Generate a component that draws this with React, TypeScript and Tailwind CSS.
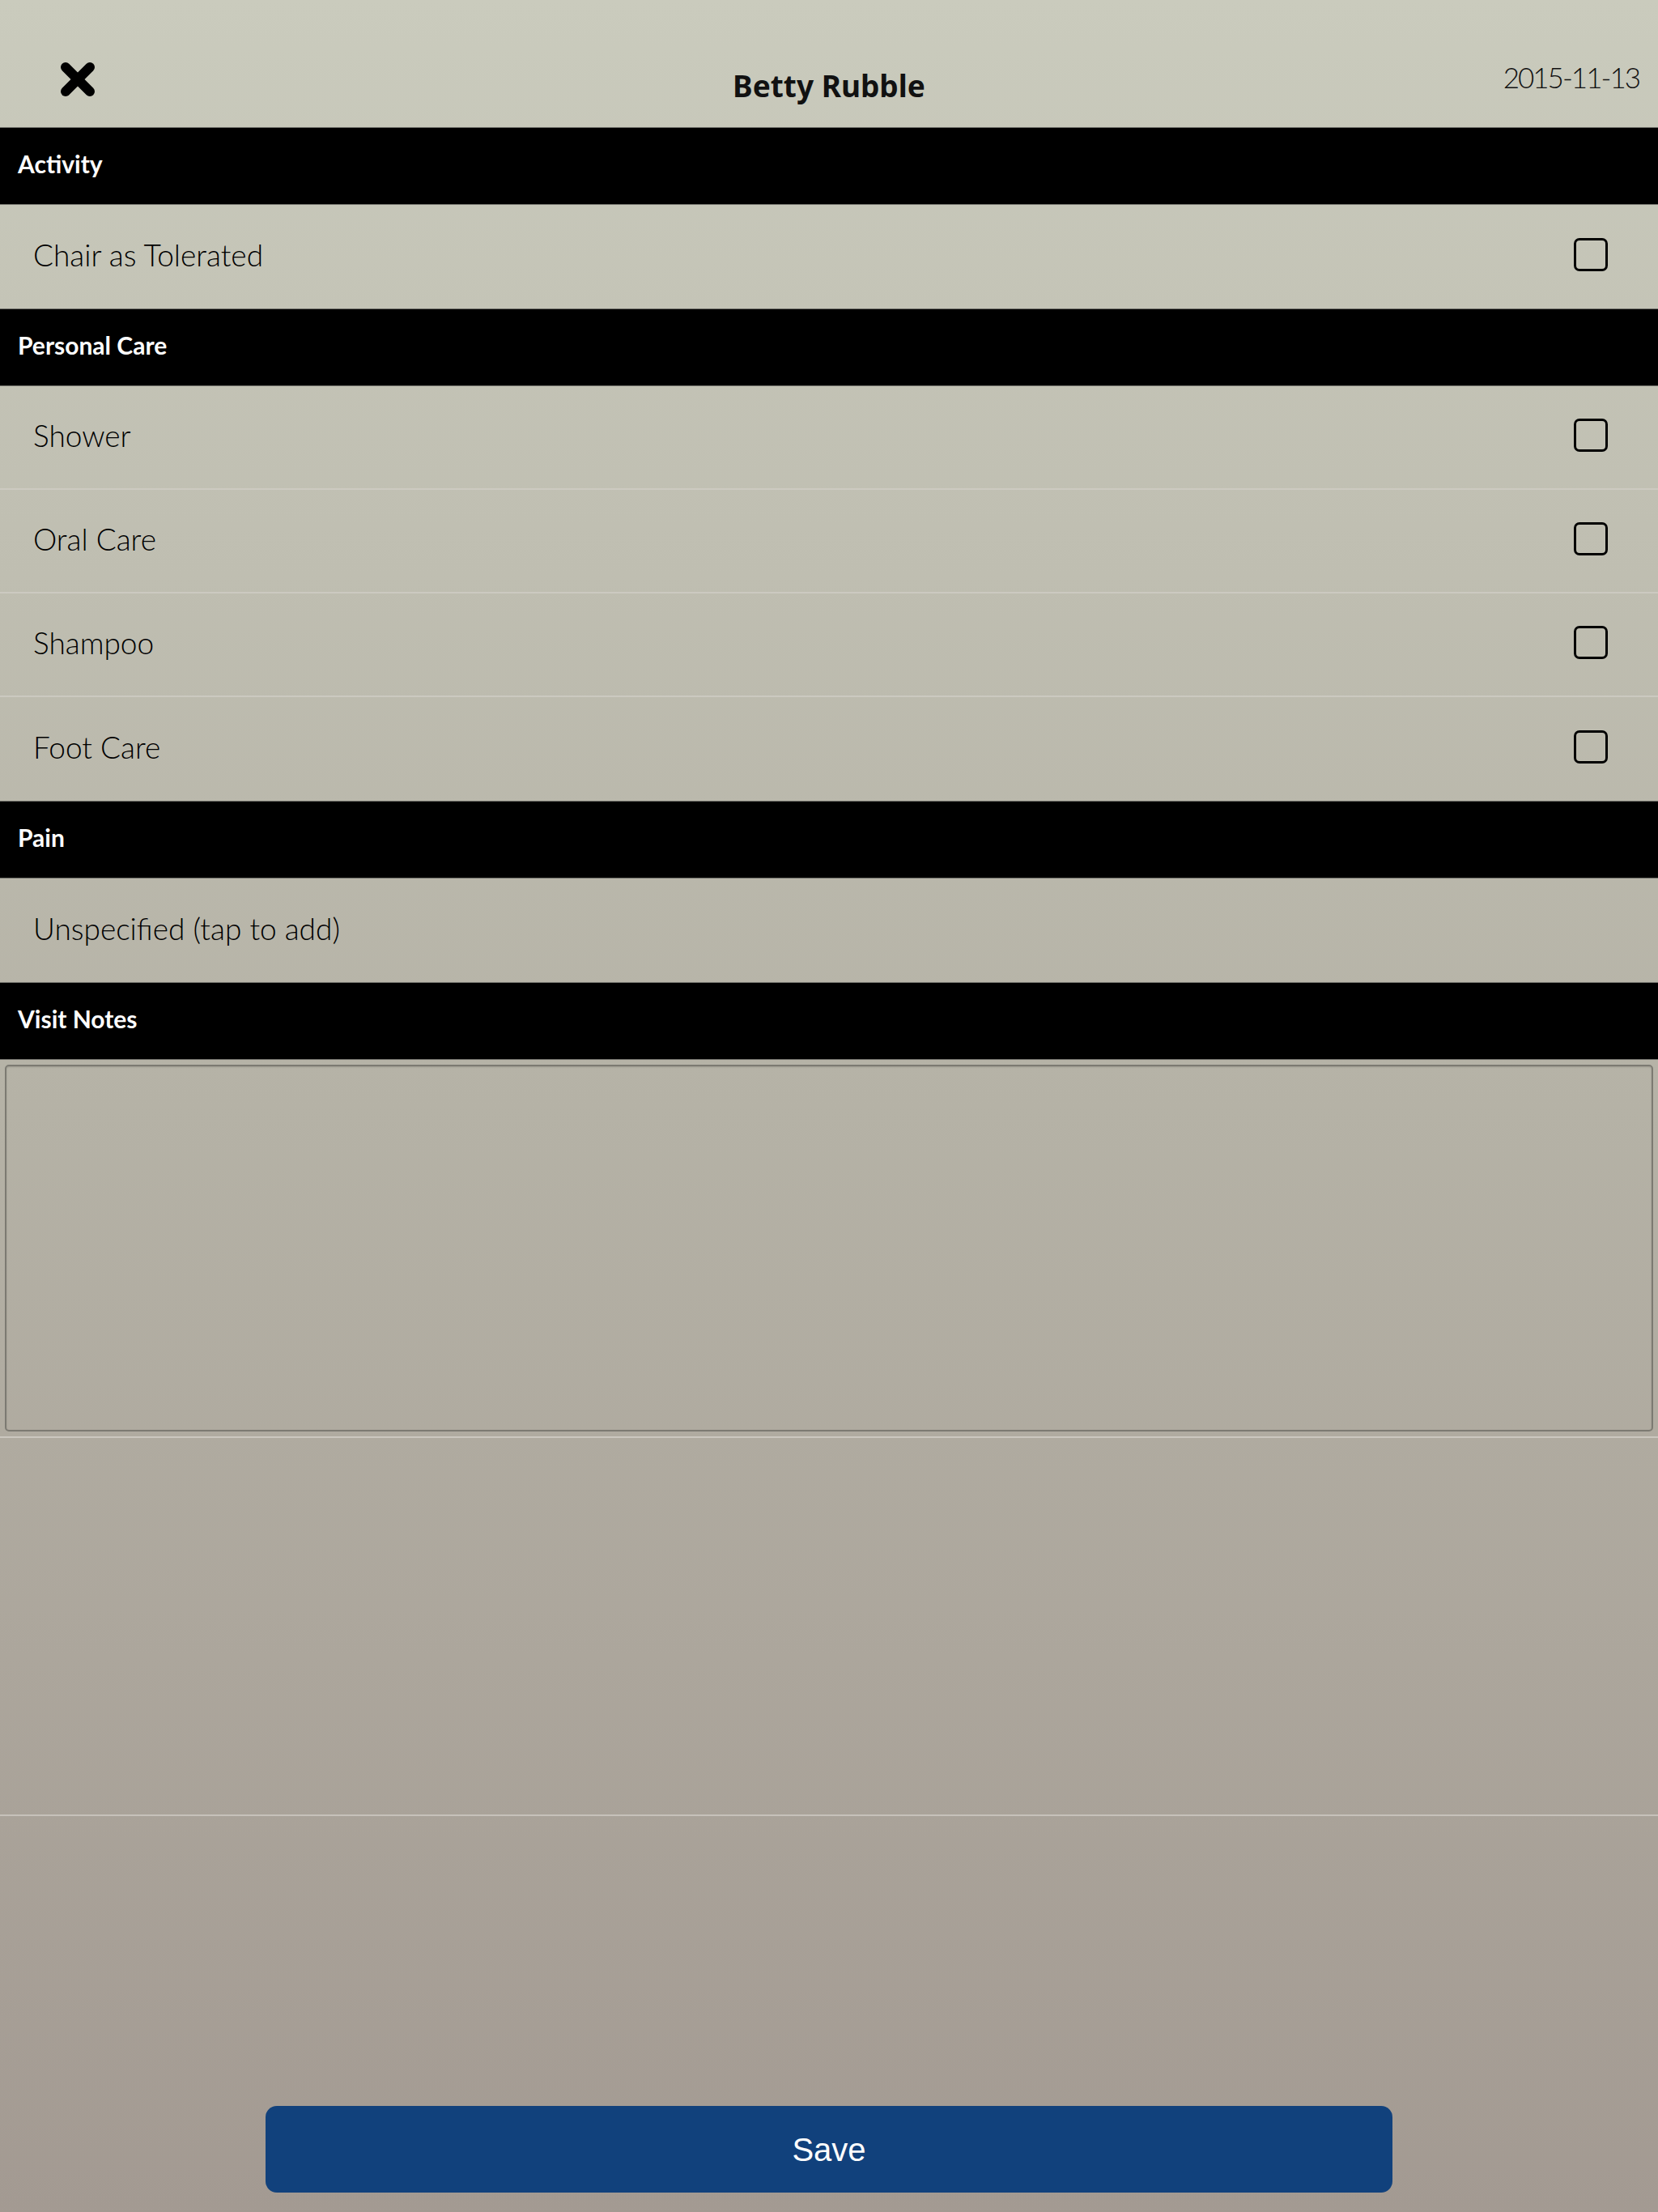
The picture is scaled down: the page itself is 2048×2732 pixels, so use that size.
import React from "react";

const sans = "font-['Lato','Noto_Sans',sans-serif]";

function CloseIcon() {
  return (
    <svg width="44" height="44" viewBox="0 0 44 44" aria-hidden="true">
      <line x1="7" y1="7" x2="37" y2="37" stroke="#000" strokeWidth="12" strokeLinecap="round" />
      <line x1="37" y1="7" x2="7" y2="37" stroke="#000" strokeWidth="12" strokeLinecap="round" />
    </svg>
  );
}

function Box() {
  return <div className="w-[42px] h-[41px] mb-[5px] rounded-[7px] border-[3px] border-black" />;
}

function SectionBar({ title }: { title: string }) {
  return (
    <div className="h-[96px] bg-black border-y border-[#6f6f69] flex items-center pl-[22px] pb-[6px]">
      <span className={`${sans} text-white font-bold text-[30px] leading-none`}>{title}</span>
    </div>
  );
}

function Row({ label, check = true, last = false }: { label: string; check?: boolean; last?: boolean }) {
  return (
    <div
      className={`h-[128px] flex items-center justify-between pl-[41px] pr-[62px] ${
        last ? "" : "border-b-2 border-[#d2cfc7]/70"
      }`}
    >
      <span className={`${sans} font-light text-[37px] leading-none text-black pb-[6px]`}>{label}</span>
      {check && <Box />}
    </div>
  );
}

export default function App() {
  return (
    <div className="w-[2048px] h-[2732px] flex flex-col bg-gradient-to-b from-[#cacbbd] via-[#b5b2a6] to-[#a39a92]">
      {/* top bar */}
      <header className="h-[157px] relative flex items-start">
        <div className="absolute left-[74px] top-[76px]">
          <CloseIcon />
        </div>
        <div className="flex-1 flex justify-center pt-[87px]">
          <span className="font-['Noto_Sans','Lato',sans-serif] font-bold text-[37px] leading-none text-[#111]">
            Betty Rubble
          </span>
        </div>
        <div className="absolute right-[23px] top-[78px]">
          <span className={`${sans} font-light text-[35px] tracking-[-2px] leading-none text-[#111]`}>2015-11-13</span>
        </div>
      </header>

      <SectionBar title="Activity" />
      <Row label="Chair as Tolerated" last />

      <SectionBar title="Personal Care" />
      <Row label="Shower" />
      <Row label="Oral Care" />
      <Row label="Shampoo" />
      <Row label="Foot Care" last />

      <SectionBar title="Pain" />
      <Row label="Unspecified (tap to add)" check={false} last />

      <SectionBar title="Visit Notes" />
      <div className="h-[467px] px-[6px] pt-[6px] pb-[6px] border-b-2 border-[#cbc7bf]">
        <div className="h-full rounded-[5px] border-2 border-[#7c7a72] shadow-[inset_0_1px_2px_rgba(0,0,0,0.15)]" />
      </div>
      <div className="h-[467px] border-b-2 border-[#c6c1ba]" />

      {/* action area */}
      <div className="flex-1 flex flex-col justify-end items-center pb-[24px]">
        <button className="w-[1392px] h-[107px] rounded-[14px] bg-[#11417c] flex items-center justify-center">
          <span className="font-['Liberation_Sans','Arial',sans-serif] text-white text-[40px] leading-none">Save</span>
        </button>
      </div>
    </div>
  );
}
